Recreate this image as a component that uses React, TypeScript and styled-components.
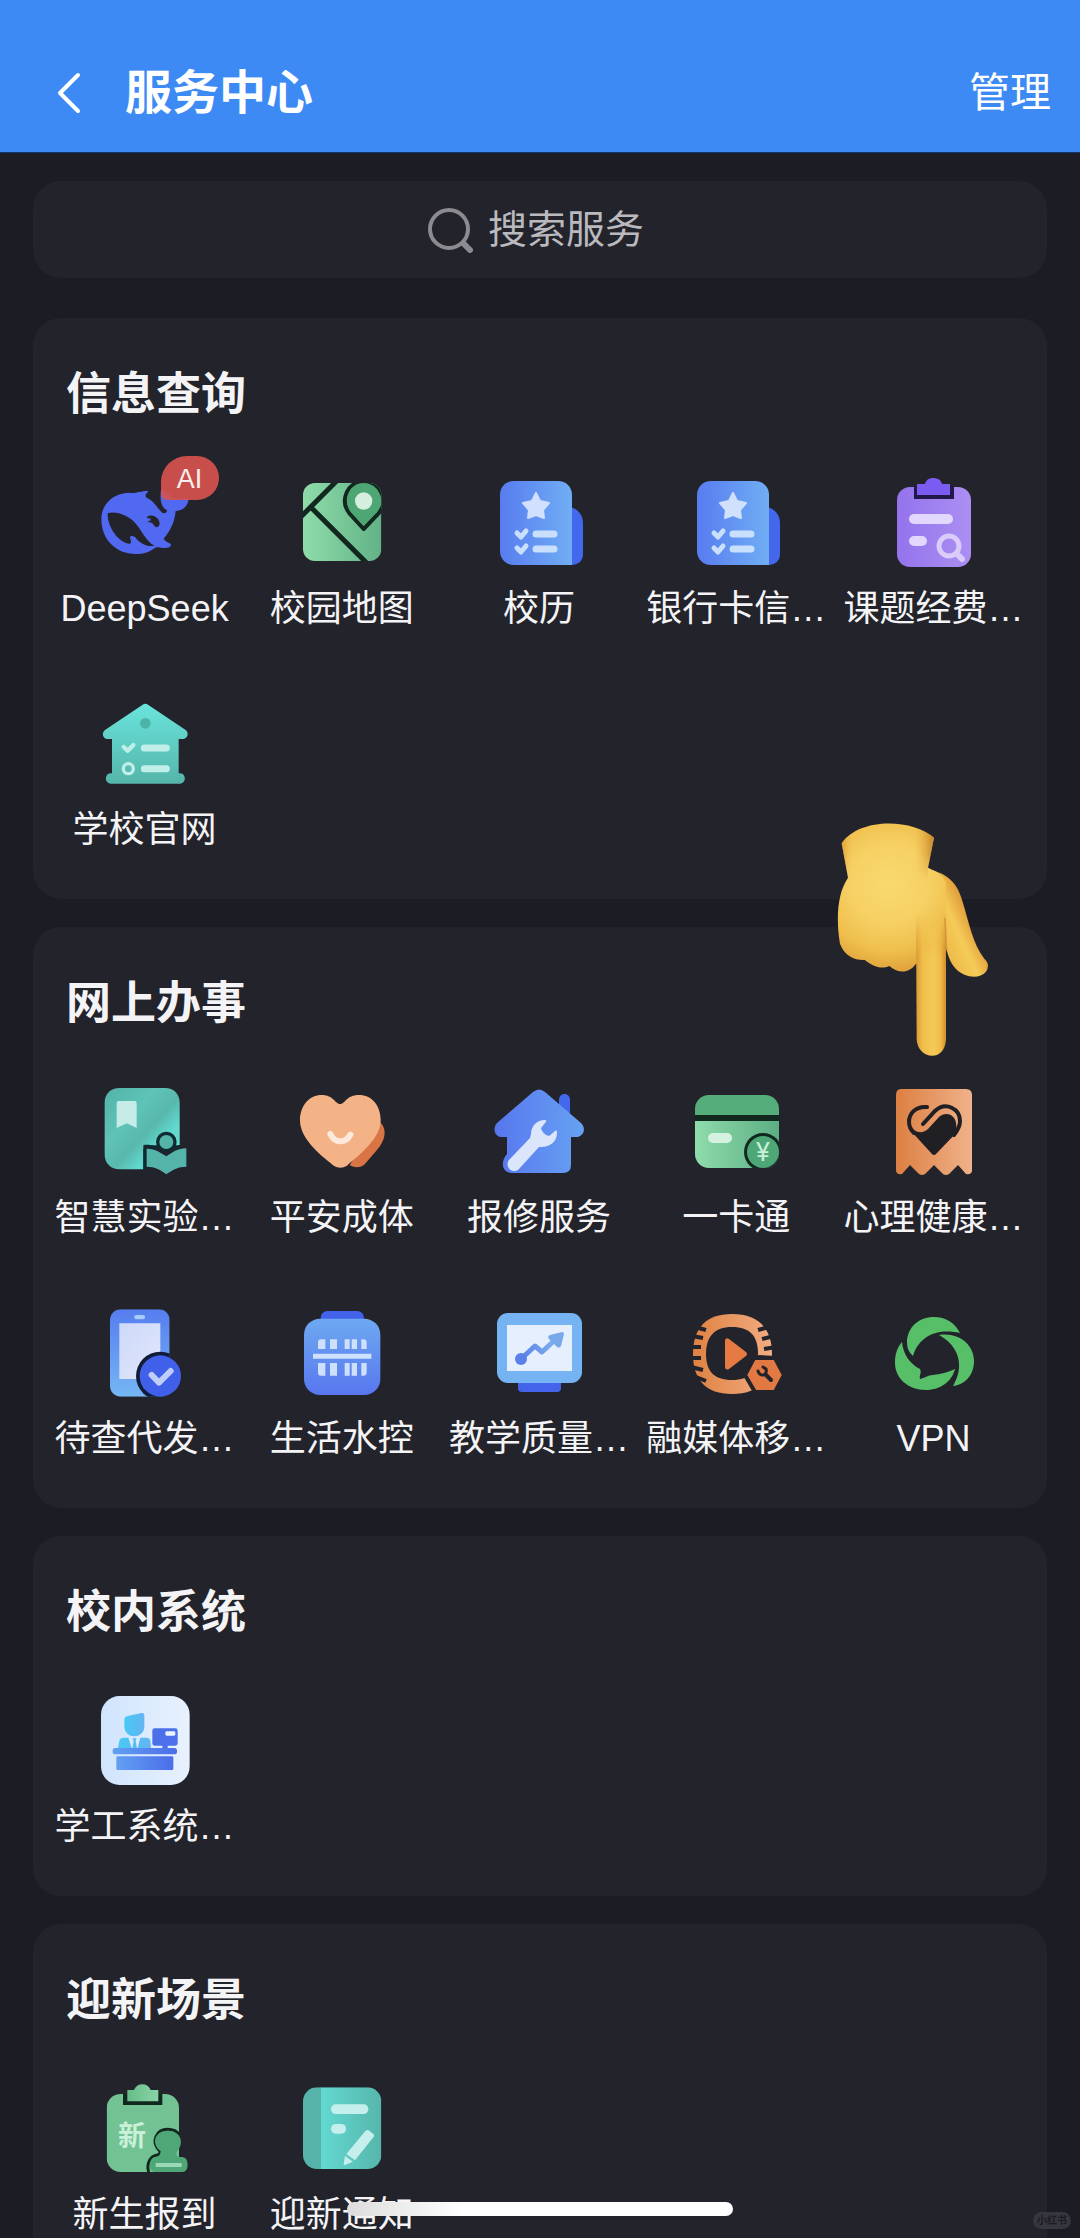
import React from "react";
import styled, { createGlobalStyle } from "styled-components";

const INK = "#12281f";
const CARD = "#23232b";

const GlobalStyle = createGlobalStyle`
  * { box-sizing: border-box; }
  body {
    margin: 0;
    background: #1c1c24;
    color: #f4f4f6;
    font-family: "Liberation Sans", "Noto Sans CJK SC", sans-serif;
  }
`;

const Screen = styled.div`
  position: relative;
  display: flex;
  flex-direction: column;
  height: 100vh;
  overflow: hidden;
`;

const Header = styled.header`
  display: flex;
  align-items: center;
  flex: none;
  padding: 57px 29px 23px 47px;
  background: #3d8af5;
  border-bottom: 1px solid #12346b;
`;

const BackButton = styled.button`
  display: flex;
  padding: 0;
  border: 0;
  background: none;
  color: #fff;
`;

const PageTitle = styled.h1`
  flex: 1;
  margin: 0 0 0 34px;
  font-size: 47px;
  line-height: 72px;
  font-weight: 700;
  color: #fff;
`;

const ManageButton = styled.button`
  padding: 0;
  border: 0;
  background: none;
  color: #fff;
  font: inherit;
  font-size: 41px;
  line-height: 72px;
`;

const Content = styled.main`
  display: flex;
  flex-direction: column;
  flex: 1;
  min-height: 0;
  gap: 28px;
  padding: 28px 33px 0;
  overflow-y: auto;
  scrollbar-width: none;
`;

const SearchBox = styled.label`
  display: flex;
  flex: none;
  align-items: center;
  justify-content: center;
  gap: 14px;
  height: 97px;
  margin-bottom: 12px;
  border-radius: 28px;
  background: ${CARD};
`;

const SearchInput = styled.input`
  width: 164px;
  padding: 0;
  border: 0;
  outline: 0;
  background: none;
  color: #f4f4f6;
  font: inherit;
  font-size: 39px;
  line-height: 56px;
  &::placeholder { color: #b9b9be; opacity: 1; }
`;

const Panel = styled.section`
  position: relative;
  flex: none;
  padding: 45px 15px 45px 13px;
  border-radius: 28px;
  background: ${CARD};
`;

const PanelTitle = styled.h2`
  margin: 0 0 47px;
  padding-left: 20px;
  font-size: 45px;
  line-height: 64px;
  font-weight: 700;
`;

const Grid = styled.nav`
  display: grid;
  grid-template-columns: repeat(5, 1fr);
  row-gap: 62px;
`;

const Service = styled.a`
  display: flex;
  flex-direction: column;
  align-items: center;
  gap: 15px;
  color: inherit;
  text-decoration: none;
`;

const IconBox = styled.span`
  position: relative;
  display: block;
  width: 96px;
  height: 96px;
`;

const Badge = styled.span`
  position: absolute;
  left: 64px;
  top: -18px;
  width: 58px;
  height: 44px;
  border-radius: 26px 22px 22px 6px;
  background: rgba(214, 82, 78, 0.92);
  color: #fbeeee;
  font-size: 27px;
  line-height: 46px;
  text-align: center;
`;

const Label = styled.span`
  font-size: 36px;
  line-height: 48px;
  white-space: nowrap;
`;

const Pointer = styled.div`
  position: absolute;
  right: 57px;
  top: -105px;
  pointer-events: none;
  svg { display: block; }
`;

const HomeIndicator = styled.div`
  position: absolute;
  left: 50%;
  bottom: 22px;
  width: 386px;
  height: 14px;
  transform: translateX(-50%);
  border-radius: 7px;
  background: linear-gradient(90deg, #dcdcdc, #fff 30%);
`;

const Watermark = styled.span`
  position: absolute;
  right: 9px;
  bottom: 9px;
  width: 38px;
  border-radius: 9px;
  background: #36363e;
  color: #1c1c24;
  font-size: 10px;
  line-height: 17px;
  font-weight: 700;
  text-align: center;
`;

type GradProps = { id: string; from: string; to: string; angle?: "h" | "v" | "d" };
const Grad = ({ id, from, to, angle = "h" }: GradProps) => (
  <linearGradient id={id} x1="0" y1="0" x2={angle === "v" ? 0 : 1} y2={angle === "h" ? 0 : 1}>
    <stop offset="0" stopColor={from} />
    <stop offset="1" stopColor={to} />
  </linearGradient>
);

type ArtProps = { box?: string; children: React.ReactNode };
const Art = ({ box = "0 0 96 96", children }: ArtProps) => (
  <svg width="96" height="96" viewBox={box} fill="none" aria-hidden="true">
    {children}
  </svg>
);

const WhaleIcon = () => (
  <Art box="172 102 288 288">
    <path
      fill="#5168f0"
      d="M185 237C185 192 220 160 268 158C288 162 300 153 324 153C327 154 326 156 322 158C317 163 316 168 321 173C345 184 352 204 368 218C376 222 381 219 382 211C364 202 360 176 364 150C378 152 388 160 396 172C410 180 430 170 446 178C446 198 430 212 408 213C405 245 394 270 372 296C376 304 385 306 393 312C396 320 388 325 370 324C360 323 354 320 347 323C330 336 312 342 289 342C228 342 185 298 185 237Z"
    />
    <path fill={CARD} d="M204 220C222 213 262 222 286 248C306 270 318 302 344 317C322 323 298 308 286 291C279 288 273 287 271 291C271 299 278 306 271 311C242 312 203 266 204 220Z" />
    <path fill={CARD} d="M321 232C329 223 345 226 353 235C362 245 363 259 351 262C341 260 343 249 331 247L323 246C330 243 331 238 321 232Z" />
    <circle cx="329" cy="239" r="4" fill="#5168f0" />
  </Art>
);

const MapIcon = () => (
  <Art box="765 102 288 288">
    <defs>
      <Grad id="map" from="#8fdcaa" to="#62b287" angle="h" />
      <clipPath id="mapClip"><rect x="792" y="129" width="235" height="234" rx="36" /></clipPath>
    </defs>
    <g clipPath="url(#mapClip)">
      <path fill="url(#map)" d="M792 129H1027V363H792Z" />
      <path stroke={INK} strokeWidth="15" d="M892 124L784 232M820 206L984 370" />
      <path fill="#4da674" stroke={INK} strokeWidth="12" strokeLinejoin="round" d="M974 267L932 221C899 179 928 124 974 124S1054 179 1018 221Z" />
    </g>
    <path fill="#4da674" d="M974 258L936 217C908 178 932 130 974 130S1040 178 1013 217Z" />
    <circle cx="974" cy="183" r="26" fill="#d5eee0" />
  </Art>
);

const ChecklistIcon = () => (
  <Art>
    <defs><Grad id="list" from="#587cf0" to="#70aef4" /></defs>
    <path fill="#4468ec" d="M79 33C87 35 92 41 92 49V80C92 87 87 91 80 91H70Z" />
    <path fill="url(#list)" d="M23 7H67C75 7 81 13 81 21V91H23C15 91 9 85 9 77V21C9 13 15 7 23 7Z" />
    <path fill="#d0e0fd" stroke="#d0e0fd" strokeWidth="2" strokeLinejoin="round" d="M45 19L49 27L58 29L52 36L53 44L45 41L37 44L38 36L32 29L41 27Z" />
    <g stroke="#c9e0fd" strokeLinecap="round" strokeLinejoin="round">
      <path strokeWidth="7" d="M45 60H63M45 75H63" />
      <path strokeWidth="5" d="M26 59L30 63L35 57M26 74L30 78L35 72" />
    </g>
  </Art>
);

const FundIcon = () => (
  <Art>
    <defs><Grad id="fund" from="#9473ec" to="#ab8ff2" /></defs>
    <rect x="12" y="13" width="74" height="80" rx="13" fill="url(#fund)" />
    <path fill="#21194a" d="M29 12H69V25H29Z" />
    <path fill="#7b5cf0" d="M32 10H40C41 6 44 4 48 4C53 4 56 6 57 10H65V21H32Z" />
    <rect x="24" y="40" width="44" height="10" rx="5" fill="#e2d7fc" />
    <rect x="24" y="62" width="18" height="10" rx="5" fill="#e2d7fc" />
    <circle cx="64" cy="72" r="10" stroke="#d9cbfa" strokeWidth="5" />
    <path stroke="#d9cbfa" strokeWidth="6" strokeLinecap="round" d="M72 80L77 85" />
  </Art>
);

const SchoolIcon = () => (
  <Art box="172 105 288 288">
    <defs><Grad id="school" from="#6ae4dc" to="#55b5aa" angle="v" /></defs>
    <path fill="url(#school)" d="M309 134Q317 128 325 134L438 210C450 220 442 237 430 237H417V340H422C440 342 440 369 422 371H212C194 369 194 342 212 340H217V237H204C190 237 184 220 196 210Z" />
    <circle cx="317" cy="190" r="16" fill="#4bb3a8" />
    <g stroke="#c0efea" strokeLinecap="round" strokeLinejoin="round">
      <path strokeWidth="21" d="M314 264H380M314 326H380" />
      <path strokeWidth="13" d="M252 261L264 272L281 255" />
      <circle cx="266" cy="326" r="15" strokeWidth="10" />
    </g>
  </Art>
);

const LabIcon = () => (
  <Art box="172 69 288 288">
    <defs>
      <linearGradient id="lab" x1="0" y1="0" x2="1" y2="1">
        <stop offset="0" stopColor="#52b3a8" />
        <stop offset=".35" stopColor="#5fc3b7" />
        <stop offset=".55" stopColor="#58b8ad" />
        <stop offset=".72" stopColor="#62dad0" />
      </linearGradient>
    </defs>
    <path fill="url(#lab)" d="M240 84H376C402 84 420 102 420 128V256H311V328H240C213 328 195 308 195 284V128C195 102 213 84 240 84Z" />
    <path fill="#c6ece9" d="M236 123H285Q291 123 291 130V204L261 190L231 204V130Q231 123 236 123Z" />
    <path fill="#0f2a31" d="M311 255C333 252 352 258 380 276C400 262 412 256 420 256V266H311V328H323V262Z" />
    <circle cx="380" cy="246" r="26" fill="#55b4aa" stroke="#0f2a31" strokeWidth="10" />
    <path fill="#55b4aa" d="M321 266C346 265 362 278 380 289C398 278 414 265 440 265V320C415 320 398 330 380 343C364 330 346 320 321 320Z" />
  </Art>
);

const HeartIcon = () => (
  <Art box="765 69 288 288">
    <path fill="#d97544" d="M1016 180C1046 202 1043 238 1012 272L975 315Q956 328 932 316Z" />
    <path fill="#f4b386" d="M904 132C918 132 922 105 960 105C998 105 1025 136 1025 181C1025 232 970 278 924 317Q904 329 884 317C834 278 783 232 783 181C783 136 812 105 848 105C884 105 888 132 904 132Z" />
    <path stroke="#feeadc" strokeWidth="18" strokeLinecap="round" d="M874 222C888 251 920 251 934 224" />
  </Art>
);

const RepairIcon = () => (
  <Art>
    <defs><Grad id="repair" from="#5876ee" to="#66a2f2" /></defs>
    <path fill="#4368ed" d="M68 34V17C68 9 79 9 79 17V34Z" />
    <path fill="url(#repair)" d="M42 9Q48 4 54 9L90 40C96 46 92 54 85 54H80V82Q80 90 72 90H21C11 90 9 79 16 71V54H11C4 54 1 46 6 40Z" />
    <path fill="#dbe6fd" d="M54 37C46 37 40 43 40 51L39 55L18 77C13 84 22 92 28 86L48 64C58 65 66 59 66 50C66 47 65 47 63 49L58 53C54 52 51 49 50 45L54 40C56 38 55 37 54 37Z" />
  </Art>
);

const CardIcon = () => (
  <Art>
    <defs>
      <Grad id="pay" from="#8fdcac" to="#5cae83" />
      <clipPath id="payClip"><rect x="7" y="12" width="84" height="73" rx="14" /></clipPath>
    </defs>
    <g clipPath="url(#payClip)">
      <path fill="url(#pay)" d="M7 35H91V85H7Z" />
      <path fill="#54ad7a" d="M7 12H91V33H7Z" />
      <path fill={INK} d="M7 32H91V38H7Z" />
      <circle cx="75" cy="69" r="19" fill={INK} />
    </g>
    <rect x="20" y="50" width="24" height="10" rx="5" fill="#d5f1e1" />
    <circle cx="75" cy="69" r="16" fill="#4ea777" />
    <text x="75" y="78" fontSize="26" textAnchor="middle" fill="#c6efd6" fontFamily="Inter, sans-serif">¥</text>
  </Art>
);

const MindIcon = () => (
  <Art>
    <defs><Grad id="mind" from="#dc7f42" to="#f0b28a" /></defs>
    <path fill="url(#mind)" d="M16 6H81Q87 6 87 12V88Q86 92 81 91L73 82L64 91Q61 93 58 91L49 82L40 91Q37 93 34 91L25 82L17 91Q11 92 11 87V12Q11 6 16 6Z" />
    <g stroke="#201f23" strokeWidth="4" strokeLinecap="round">
      <path d="M42 24C30 23 24 31 24 39C24 43 26 47 29 50" />
      <path d="M38 41L50 28C61 18 75 26 75 38C75 43 73 47 69 52" />
    </g>
    <path fill="#201f23" d="M24 43C30 50 38 51 43 46L54 34C60 28 70 31 71 40Q71 45 73 48L51 71Q49 73 47 71L26 48Z" />
  </Art>
);

const PhoneIcon = () => (
  <Art box="172 72 288 288">
    <defs>
      <Grad id="phone" from="#567def" to="#75b7f4" angle="v" />
      <Grad id="screen" from="#ccd9f8" to="#e2e7fd" angle="d" />
      <clipPath id="phoneClip"><rect x="211" y="88" width="179" height="262" rx="32" /></clipPath>
    </defs>
    <g clipPath="url(#phoneClip)">
      <path fill="url(#phone)" d="M211 88H390V350H211Z" />
      <path fill="url(#screen)" d="M239 130H362V297H239Z" />
      <circle cx="362" cy="288" r="73" fill="#101c38" />
    </g>
    <rect x="284" y="105" width="32" height="13" rx="6" fill="#a9ccf9" />
    <circle cx="362" cy="288" r="62" fill="#4060ea" />
    <path stroke="#c0cdfa" strokeWidth="18" strokeLinecap="round" strokeLinejoin="round" d="M336 285L358 308L393 273" />
  </Art>
);

const WaterIcon = () => (
  <Art box="765 72 288 288">
    <defs><Grad id="water" from="#6ea9f1" to="#5877ef" angle="v" /></defs>
    <rect x="845" y="93" width="130" height="50" rx="20" fill="#4262e9" />
    <rect x="795" y="116" width="229" height="229" rx="48" fill="url(#water)" />
    <g fill="#cfe0fd">
      <path d="M846 178H859V207H837V188Q837 178 846 178ZM873 178H894V207H873ZM917 178H932V207H917ZM938 178H954V207H938ZM967 178H973Q983 178 983 188V207H967Z" />
      <path d="M822 221H997V236H822Z" />
      <path d="M837 249H859V287H846Q837 287 837 278ZM873 249H894V287H873ZM917 249H932V287H917ZM938 249H954V287H938ZM967 249H983V278Q983 287 973 287H967Z" />
    </g>
  </Art>
);

const QualityIcon = () => (
  <Art>
    <defs><Grad id="trend" from="#5b80e9" to="#82b4ec" /></defs>
    <path fill="#4263ea" d="M27 78H70V84Q70 88 66 88H31Q27 88 27 84Z" />
    <rect x="6" y="9" width="85" height="70" rx="11" fill="#76b3f3" />
    <path fill="#e5effd" d="M16 21H81V67H16Z" />
    <path stroke="url(#trend)" strokeWidth="5" strokeLinejoin="round" d="M30 55L44 42L51 48L66 34" />
    <circle cx="30" cy="55" r="6" fill="#5b80e9" />
    <path fill="#78a8ea" d="M59 31L71 28Q73 28 73 30L70 42Q68 45 65 42L58 35Q56 32 59 31Z" />
  </Art>
);

const MediaIcon = () => (
  <Art>
    <defs><Grad id="media" from="#df8242" to="#f2ad82" /></defs>
    <path fill="url(#media)" d="M44 10C70 10 84 24 84 50C84 76 70 90 44 90S5 76 5 50S18 10 44 10Z" />
    <path fill={CARD} d="M44 23C62 23 70 32 70 50C70 67 62 76 44 76S18 67 18 50S26 23 44 23Z" />
    <path stroke={CARD} strokeWidth="4" d="M7 23L18 26M4 32L15 34M2 43H13M2 54H13M3 63L15 66M8 73L18 77M81 23L70 26M86 32L74 35M88 43L76 45M88 54L70 53" />
    <path fill="#e57a43" d="M37 37Q37 33 41 35L58 48Q60 50 58 52L41 65Q37 67 37 62Z" />
    <path fill="#e27842" stroke={CARD} strokeWidth="4" d="M66 54H87L96 71L87 88H67L57 71Z" />
    <path stroke={CARD} strokeWidth="4" strokeLinecap="round" d="M78 71L83 76" />
    <path stroke={CARD} strokeWidth="3" strokeLinecap="round" d="M70 67C72 74 80 71 78 65L75 63" />
  </Art>
);

const VpnIcon = () => (
  <Art>
    <g fill="#58bf69">
      <path d="M22 39C22 23 34 13 49 13C61 13 70 19 75 29C54 24 34 31 28 52Q22 47 22 39Z" />
      <path d="M54 31C73 28 89 40 89 57C89 72 79 81 68 82C80 62 74 42 54 31Z" />
      <path d="M17 38C18 50 25 60 35 65C37 68 34 72 35 75C40 74 43 71 48 71C57 70 64 68 70 65C67 77 56 86 41 86C23 86 10 74 10 59C10 50 12 44 17 38Z" />
    </g>
  </Art>
);

const DeskIcon = () => (
  <Art box="172 96 288 288">
    <defs>
      <Grad id="tile" from="#d0e4fd" to="#e8f1fe" />
      <Grad id="head" from="#48c9f4" to="#62b4f2" />
      <Grad id="desk" from="#62a0f2" to="#4a6de8" />
    </defs>
    <rect x="184" y="108" width="266" height="267" rx="56" fill="url(#tile)" />
    <path fill="url(#head)" d="M254 180Q254 170 264 168L306 159Q314 158 314 166V199C314 239 254 239 254 199Z" />
    <path fill="url(#head)" d="M235 265L239 242Q241 233 252 233H266L276 265ZM294 265L302 233H320Q330 233 332 242L334 265ZM279 235H290L288 244L292 265H278L282 244Z" />
    <rect x="338" y="205" width="76" height="52" rx="7" fill="#4b70e9" />
    <path fill="#4b70e9" d="M368 255H384V270H368Z" />
    <rect x="377" y="214" width="30" height="13" rx="4" fill="#edf3ff" />
    <rect x="219" y="264" width="193" height="19" rx="8" fill="url(#desk)" />
    <rect x="230" y="289" width="171" height="41" rx="4" fill="url(#desk)" />
  </Art>
);

const EnrollIcon = () => (
  <Art box="172 120 288 288">
    <defs>
      <Grad id="clip" from="#66bd88" to="#8ad4a7" />
      <clipPath id="enrollClip"><rect x="201" y="162" width="217" height="234" rx="42" /></clipPath>
    </defs>
    <g clipPath="url(#enrollClip)">
      <path fill="#72c293" d="M201 162H418V396H201Z" />
      <path fill={INK} d="M250 150H368V195H250Z" />
    </g>
    <path fill="url(#clip)" d="M263 150H283Q290 133 308 133Q326 133 333 150H356V184H263Z" />
    <text x="277" y="318" fontSize="84" fontWeight="700" textAnchor="middle" fill="#c9f0d8" fontFamily="Noto Sans CJK SC, sans-serif">新</text>
    <path stroke={INK} strokeWidth="9" d="M327 396C320 372 330 346 356 344Q363 340 361 334C330 304 352 268 384 268Q408 268 419 285" />
    <path fill="#4fa676" d="M384 272C424 272 435 310 412 334Q406 345 416 351H426Q444 352 444 374Q444 396 426 396H350Q331 396 331 374Q331 352 350 351Q362 349 363 334C333 310 345 272 384 272Z" />
    <path stroke="#9bd8b6" strokeWidth="12" d="M348 375H426" />
  </Art>
);

const NoticeIcon = () => (
  <Art box="765 120 288 288">
    <defs>
      <Grad id="notice" from="#63d9d2" to="#57b6ab" />
      <clipPath id="noticeClip"><rect x="792" y="142" width="235" height="245" rx="42" /></clipPath>
    </defs>
    <g clipPath="url(#noticeClip)">
      <path fill="url(#notice)" d="M845 142H1027V387H845Z" />
      <path fill="#55b3aa" d="M792 142H846V387H792Z" />
    </g>
    <rect x="876" y="193" width="112" height="29" rx="14" fill="#c5efec" />
    <rect x="876" y="252" width="45" height="29" rx="14" fill="#c5efec" />
    <path fill="#c5efec" d="M979 273Q985 267 991 272L1002 281Q1008 286 1003 292L948 361L922 342ZM918 348L942 365L918 375Q914 376 914 371Z" />
  </Art>
);

const HandPointingDown = () => (
  <svg width="154" height="236" viewBox="110 65 462 708" role="img" aria-label="指向心理健康">
    <defs>
      <radialGradient id="palm" gradientUnits="userSpaceOnUse" cx="270" cy="250" r="270">
        <stop offset="0" stopColor="#f9d970" />
        <stop offset=".45" stopColor="#f6d063" />
        <stop offset=".75" stopColor="#efbf4c" />
        <stop offset="1" stopColor="#dfa03a" />
      </radialGradient>
      <linearGradient id="finger" x1="0" y1="0" x2="1" y2="0">
        <stop offset="0" stopColor="#d99a36" />
        <stop offset=".22" stopColor="#f0be4a" />
        <stop offset=".6" stopColor="#f5ca57" />
        <stop offset=".82" stopColor="#efba47" />
        <stop offset="1" stopColor="#d18c2f" />
      </linearGradient>
      <linearGradient id="thumb" gradientUnits="userSpaceOnUse" x1="420" y1="400" x2="530" y2="350">
        <stop offset="0" stopColor="#eebb49" />
        <stop offset=".45" stopColor="#f5cb58" />
        <stop offset="1" stopColor="#d98f30" />
      </linearGradient>
      <linearGradient id="cuff" x1="0" y1="0" x2="1" y2="0">
        <stop offset="0" stopColor="#d38d2c" stopOpacity=".6" />
        <stop offset=".1" stopColor="#e3a63c" stopOpacity="0" />
        <stop offset=".8" stopColor="#e3a63c" stopOpacity="0" />
        <stop offset="1" stopColor="#b87424" stopOpacity=".8" />
      </linearGradient>
      <linearGradient id="cuffFade" gradientUnits="userSpaceOnUse" x1="0" y1="160" x2="0" y2="240">
        <stop offset="0" stopColor="#fff" />
        <stop offset="1" stopColor="#fff" stopOpacity="0" />
      </linearGradient>
      <linearGradient id="fingerFade" gradientUnits="userSpaceOnUse" x1="0" y1="340" x2="0" y2="470">
        <stop offset="0" stopColor="#fff" stopOpacity="0" />
        <stop offset="1" stopColor="#fff" />
      </linearGradient>
      <mask id="cuffMask" maskUnits="userSpaceOnUse" x="110" y="60" width="320" height="200">
        <rect x="110" y="60" width="320" height="200" fill="url(#cuffFade)" />
      </mask>
      <mask id="fingerMask" maskUnits="userSpaceOnUse" x="340" y="330" width="110" height="450">
        <rect x="340" y="330" width="110" height="450" fill="url(#fingerFade)" />
      </mask>
    </defs>
    <path fill="url(#thumb)" d="M400 210C450 226 475 250 490 305C510 370 520 430 555 475Q574 492 560 514C540 538 495 532 470 506C452 486 445 465 438 430L400 400Z" />
    <path fill="url(#palm)" d="M127 129C180 50 340 55 404 112L386 202Q425 218 440 245V480L350 490C330 518 300 522 270 497C245 508 220 498 196 479C165 480 135 466 122 430C110 360 113 280 146 232Z" />
    <path fill="url(#cuff)" mask="url(#cuffMask)" d="M127 129C180 50 340 55 404 112L386 202V240H145L146 232Z" />
    <path fill="url(#finger)" mask="url(#fingerMask)" d="M350 340H440V718C438 748 422 766 398 766C374 766 354 746 352 718Z" />
    <path fill="none" stroke="#c98a30" strokeOpacity=".6" strokeWidth="5" strokeLinecap="round" d="M437 355Q440 410 442 450" />
  </svg>
);

type Item = { name: string; Icon: () => React.JSX.Element; badge?: string };
type Group = { title: string; items: Item[]; pointer?: boolean };

const groups: Group[] = [
  {
    title: "信息查询",
    items: [
      { name: "DeepSeek", Icon: WhaleIcon, badge: "AI" },
      { name: "校园地图", Icon: MapIcon },
      { name: "校历", Icon: ChecklistIcon },
      { name: "银行卡信…", Icon: ChecklistIcon },
      { name: "课题经费…", Icon: FundIcon },
      { name: "学校官网", Icon: SchoolIcon },
    ],
  },
  {
    title: "网上办事",
    pointer: true,
    items: [
      { name: "智慧实验…", Icon: LabIcon },
      { name: "平安成体", Icon: HeartIcon },
      { name: "报修服务", Icon: RepairIcon },
      { name: "一卡通", Icon: CardIcon },
      { name: "心理健康…", Icon: MindIcon },
      { name: "待查代发…", Icon: PhoneIcon },
      { name: "生活水控", Icon: WaterIcon },
      { name: "教学质量…", Icon: QualityIcon },
      { name: "融媒体移…", Icon: MediaIcon },
      { name: "VPN", Icon: VpnIcon },
    ],
  },
  { title: "校内系统", items: [{ name: "学工系统…", Icon: DeskIcon }] },
  {
    title: "迎新场景",
    items: [
      { name: "新生报到", Icon: EnrollIcon },
      { name: "迎新通知", Icon: NoticeIcon },
    ],
  },
];

export default function App() {
  return (
    <Screen>
      <GlobalStyle />
      <Header>
        <BackButton type="button" aria-label="返回">
          <svg width="44" height="44" viewBox="0 0 44 44" fill="none" stroke="currentColor" strokeWidth="4" strokeLinecap="round" strokeLinejoin="round">
            <path d="M31 4L13 22L31 40" />
          </svg>
        </BackButton>
        <PageTitle>服务中心</PageTitle>
        <ManageButton type="button">管理</ManageButton>
      </Header>
      <Content>
        <SearchBox>
          <svg width="46" height="46" viewBox="0 0 46 46" fill="none" stroke="#8b8b90" aria-hidden="true">
            <circle cx="21" cy="22" r="19" strokeWidth="4" />
            <path strokeWidth="6" strokeLinecap="round" d="M36 37L42 43" />
          </svg>
          <SearchInput type="text" placeholder="搜索服务" aria-label="搜索服务" />
        </SearchBox>
        {groups.map(({ title, items, pointer }) => (
          <Panel key={title}>
            <PanelTitle>{title}</PanelTitle>
            <Grid aria-label={title}>
              {items.map(({ name, Icon, badge }) => (
                <Service key={name} href="#">
                  <IconBox>
                    <Icon />
                    {badge && <Badge>{badge}</Badge>}
                  </IconBox>
                  <Label>{name}</Label>
                </Service>
              ))}
            </Grid>
            {pointer && <Pointer><HandPointingDown /></Pointer>}
          </Panel>
        ))}
      </Content>
      <HomeIndicator />
      <Watermark>小红书</Watermark>
    </Screen>
  );
}
